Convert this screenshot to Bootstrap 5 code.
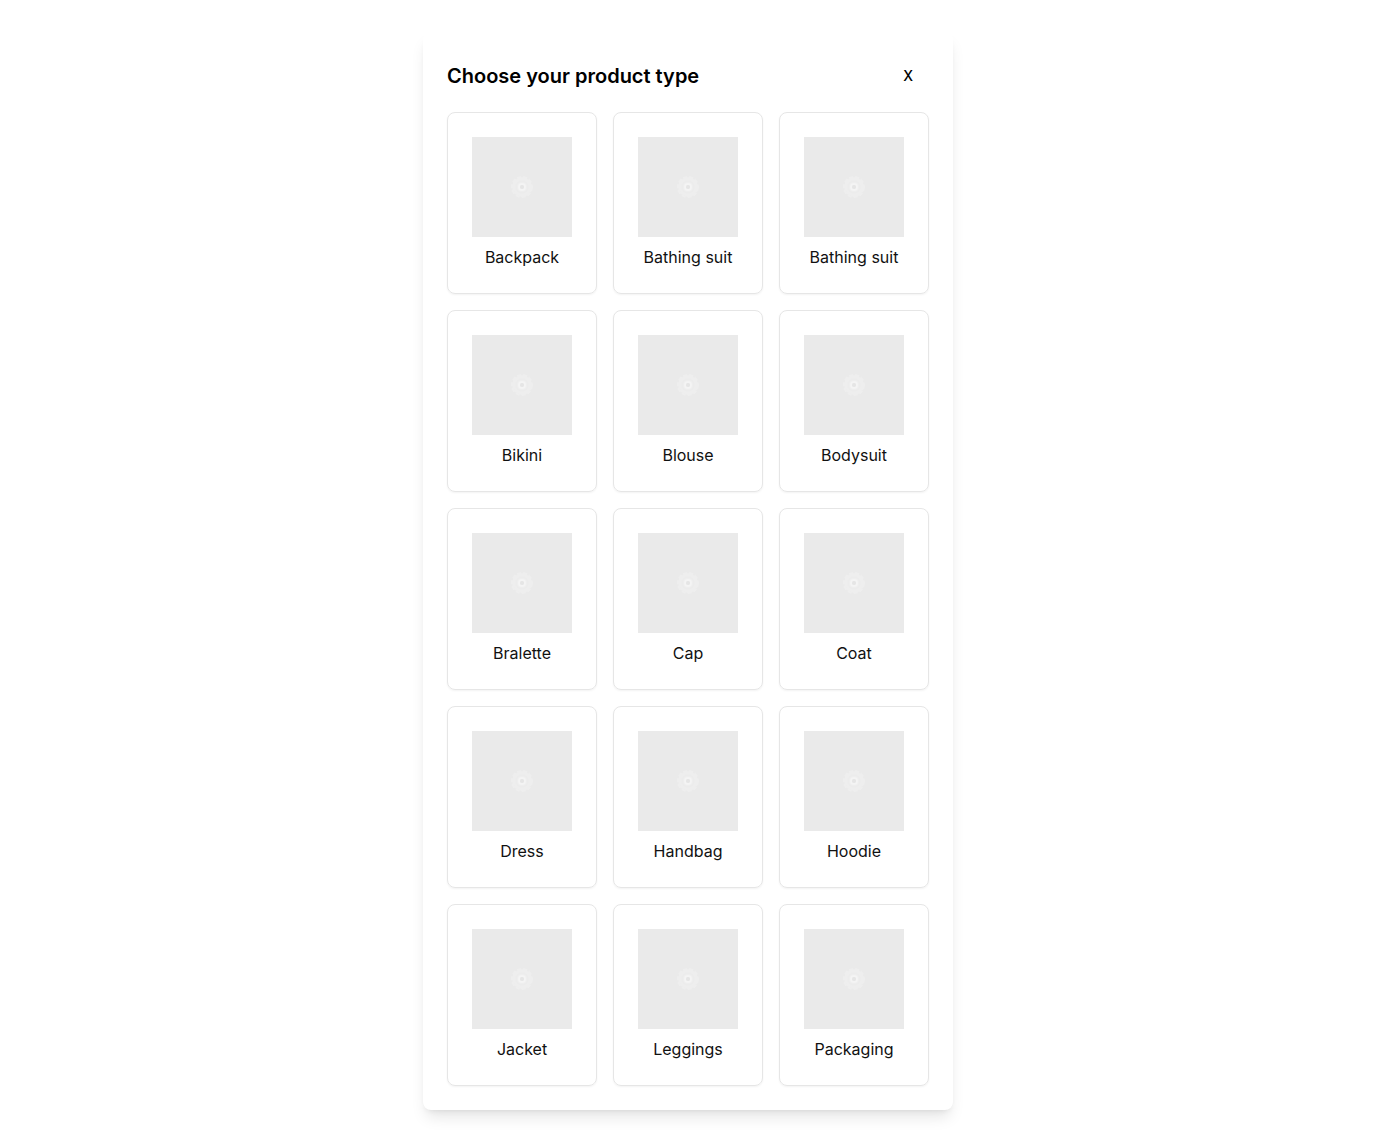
<!DOCTYPE html>
<html lang="en">
<head>
<meta charset="utf-8">
<meta name="viewport" content="width=device-width, initial-scale=1">
<title>Choose your product type</title>
<link rel="stylesheet" href="https://cdn.jsdelivr.net/npm/bootstrap@5.3.0/dist/css/bootstrap.min.css">
<style>
body { font-family: Inter, "Liberation Sans", sans-serif; color: #111; background: #fff; }
.chooser { max-width: 530px; border-radius: 8px; box-shadow: 0 10px 15px -3px rgba(0,0,0,.1), 0 4px 6px -4px rgba(0,0,0,.1); }
.chooser-title { font-size: 20px; line-height: 28px; font-weight: 600; color: #000; }
.chooser-close { height: 40px; font-size: 14px; line-height: 20px; font-weight: 500; border: 0; color: #000; }
.type-card { border: 1px solid #e6e6e6; border-radius: 8px; box-shadow: 0 1px 2px rgba(0,0,0,.05); color: #111; line-height: 24px; }
.type-card:hover { background: #f4f4f5; }
.thumb { width: 100px; height: 100px; background: #eaeaea; }
</style>
<script src="https://cdn.jsdelivr.net/npm/bootstrap@5.3.0/dist/js/bootstrap.bundle.min.js" defer></script>
</head>
<body>
<svg class="d-none" aria-hidden="true">
  <symbol id="disc" viewBox="0 0 100 100">
    <circle cx="50" cy="50" r="10" fill="#eeeeee"/>
    <circle cx="50" cy="50" r="10" fill="none" stroke="#eeeeee" stroke-width="2" stroke-dasharray="4 2"/>
    <circle cx="50" cy="50" r="6" fill="none" stroke="#ececec" stroke-width="1"/>
    <circle cx="50" cy="50" r="3" fill="#ebebeb" stroke="#f4f4f4" stroke-width="2"/>
    <circle cx="50" cy="50" r="2" fill="#e5e5e5"/>
  </symbol>
</svg>
<main class="container-fluid py-4 px-3">
  <section class="chooser bg-white mx-auto mt-2 p-4" aria-labelledby="chooser-title">
    <header class="d-flex align-items-center justify-content-between mb-3">
      <h1 class="chooser-title m-0" id="chooser-title">Choose your product type</h1>
      <button type="button" class="chooser-close btn px-3 py-2" aria-label="Close">X</button>
    </header>
    <div class="row row-cols-3 g-3" id="types"></div>
  </section>
</main>
<script>
const types = ["Backpack", "Bathing suit", "Bathing suit", "Bikini", "Blouse", "Bodysuit", "Bralette", "Cap", "Coat", "Dress", "Handbag", "Hoodie", "Jacket", "Leggings", "Packaging"];
document.getElementById("types").innerHTML = types.map(name => `
  <div class="col">
    <button type="button" class="type-card btn w-100 px-0 py-4 d-flex flex-column align-items-center gap-2">
      <svg class="thumb" aria-hidden="true"><use href="#disc"/></svg>
      <span>${name}</span>
    </button>
  </div>`).join("");
</script>
</body>
</html>
